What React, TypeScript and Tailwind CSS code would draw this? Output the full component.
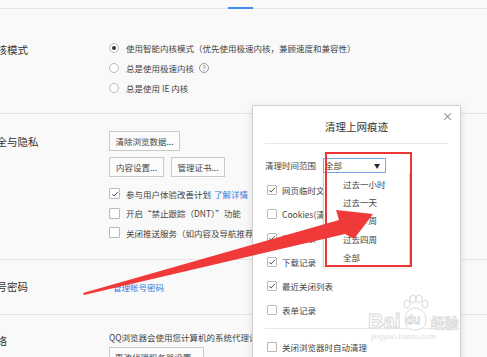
import React from "react";

const cjk = "font-['Noto_Sans_CJK_SC','Noto_Sans',sans-serif]";

function Radio({ on }: { on?: boolean }) {
  return (
    <span className="flex h-[10px] w-[10px] shrink-0 items-center justify-center rounded-full border border-[#b9b9b9] bg-white">
      {on && <span className="h-[4px] w-[4px] rounded-full bg-[#333]" />}
    </span>
  );
}

function Check({ on, small }: { on?: boolean; small?: boolean }) {
  return (
    <span
      className={
        small
          ? "flex h-[10px] w-[10px] shrink-0 items-center justify-center rounded-[1px] border border-[#b9b9b9] bg-white"
          : "flex h-[11px] w-[11px] shrink-0 items-center justify-center rounded-[1px] border border-[#b9b9b9] bg-white"
      }
    >
      {on && (
        <svg viewBox="0 0 10 10" className="h-[8px] w-[8px]">
          <path d="M1.6 5.2 L3.9 7.4 L8.4 2.6" fill="none" stroke="#444" strokeWidth="1.2" />
        </svg>
      )}
    </span>
  );
}

function Btn({ children, w }: { children: React.ReactNode; w: string }) {
  return (
    <div className={`${w} flex h-[20px] items-center justify-center border border-[#c9c9c9] bg-[#fcfcfc] text-[8.5px] leading-none text-[#444]`}>
      {children}
    </div>
  );
}

const options = ["过去一小时", "过去一天", "过去一周", "过去四周", "全部"];

const dialogChecks = [
  { t: "网页临时文件", on: true },
  { t: "Cookies(清除后需要重新登录)", on: false },
  { t: "历史记录", on: true },
  { t: "下载记录", on: true },
  { t: "最近关闭列表", on: true },
  { t: "表单记录", on: false },
];

export default function App() {
  return (
    <div className={`relative h-[357px] w-[487px] overflow-hidden bg-[#f9f9f9] text-[#444] ${cjk}`}>
      {/* top tab strip */}
      <div className="h-[9px] border-b border-[#e6e6e6] pt-[7px]">
        <div className="ml-[228px] h-[2px] w-[25px] bg-[#3d8ef0]" />
      </div>

      {/* kernel mode */}
      <div className="flex h-[105px] border-b border-[#e6e6e6]">
        <div className="w-[109px] shrink-0 overflow-hidden pt-[34px]">
          <div className="ml-[-14px] whitespace-nowrap text-[10.5px] leading-[14px] text-[#333]">内核模式</div>
        </div>
        <div className="pt-[29px] text-[8.5px] leading-none">
          <div className="flex h-[20px] items-center gap-[7px] whitespace-nowrap">
            <Radio on />
            <span>使用智能内核模式（优先使用极速内核，兼顾速度和兼容性）</span>
          </div>
          <div className="flex h-[20px] items-center gap-[7px] whitespace-nowrap">
            <Radio />
            <span>总是使用极速内核</span>
            <span className="ml-[-2px] flex h-[10px] w-[10px] items-center justify-center rounded-full border border-[#999] text-[7px] text-[#777]">?</span>
          </div>
          <div className="flex h-[20px] items-center gap-[7px] whitespace-nowrap">
            <Radio />
            <span>总是使用 IE 内核</span>
          </div>
        </div>
      </div>

      {/* security & privacy */}
      <div className="flex h-[146px] border-b border-[#e6e6e6]">
        <div className="w-[109px] shrink-0 overflow-hidden pt-[21px]">
          <div className="ml-[-14px] whitespace-nowrap text-[10.5px] leading-[14px] text-[#333]">安全与隐私</div>
        </div>
        <div className="pt-[17px] text-[8.5px] leading-none">
          <Btn w="w-[71px]">清除浏览数据...</Btn>
          <div className="mt-[6px] flex gap-[7px]">
            <Btn w="w-[55px]">内容设置...</Btn>
            <Btn w="w-[54px]">管理证书...</Btn>
          </div>
          <div className="mt-[7px]">
            <div className="flex h-[19.5px] items-center gap-[6px] whitespace-nowrap">
              <Check on />
              <span>参与用户体验改善计划</span>
              <span className="ml-[-3px] text-[#2f7de1]">了解详情</span>
            </div>
            <div className="flex h-[19.5px] items-center gap-[6px] whitespace-nowrap">
              <Check />
              <span>开启“禁止跟踪（DNT）”功能</span>
            </div>
            <div className="flex h-[19.5px] items-center gap-[6px] whitespace-nowrap">
              <Check />
              <span>关闭推送服务（如内容及导航推荐）</span>
            </div>
          </div>
        </div>
      </div>

      {/* accounts */}
      <div className="flex h-[55px] items-center border-b border-[#e6e6e6]">
        <div className="w-[109px] shrink-0 overflow-hidden">
          <div className="ml-[-14px] whitespace-nowrap text-[10.5px] leading-[14px] text-[#333]">帐号密码</div>
        </div>
        <div className="pl-[4px] text-[8.5px] leading-none text-[#2f7de1]">管理帐号密码</div>
      </div>

      {/* network */}
      <div className="flex">
        <div className="w-[109px] shrink-0 overflow-hidden pt-[19px]">
          <div className="ml-[-14px] whitespace-nowrap text-[10.5px] leading-[14px] text-[#333]">网络</div>
        </div>
        <div className="pt-[16px] text-[8.5px] leading-[12px]">
          <div className="whitespace-nowrap">QQ浏览器会使用您计算机的系统代理设置连接到网络。</div>
          <div className="mt-[4px]">
            <Btn w="w-[95px]">更改代理服务器设置...</Btn>
          </div>
        </div>
      </div>

      {/* clear-traces dialog */}
      <div className="absolute left-[252px] top-[105px] h-[270px] w-[209px] border border-[#cfcfcf] bg-white shadow-[0_2px_8px_rgba(0,0,0,0.12)]">
        <div className="relative h-[37px] pt-[14px] text-center text-[10.5px] leading-[14px] text-[#333]">
          清理上网痕迹
          <span className="absolute right-[7px] top-[4px] text-[11px] leading-[12px] text-[#777]">×</span>
        </div>
        <div className="mx-[12px] h-px bg-[#e8e8e8]" />
        <div className="px-[12px] text-[8.5px] leading-none">
          <div className="mt-[14px] flex h-[15px] items-center">
            <span className="w-[58px] whitespace-nowrap">清理时间范围</span>
            <div className="flex h-[15px] w-[63px] items-center justify-between border border-[#7aa6e4] bg-white pl-[1px] pr-[5px]">
              <span>全部</span>
              <span className="text-[6px] text-[#222]">▼</span>
            </div>
          </div>
          <div className="mt-[5px] ml-[2px]">
            {dialogChecks.map((c) => (
              <div key={c.t} className="flex h-[24px] items-center gap-[5px] whitespace-nowrap">
                <Check small on={c.on} />
                <span>{c.t}</span>
              </div>
            ))}
          </div>
          <div className="mt-[6px] h-px bg-[#e8e8e8]" />
          <div className="ml-[2px] mt-[6px] flex h-[24px] items-center gap-[5px] whitespace-nowrap">
            <Check small />
            <span>关闭浏览器时自动清理</span>
          </div>
        </div>
      </div>

      {/* open dropdown list */}
      <div className="absolute left-[323px] top-[173px] h-[94px] w-[87px] border border-t-0 border-[#cfcfcf] bg-white pt-[2px] text-[8.5px] leading-none shadow-[0_2px_4px_rgba(0,0,0,0.08)]">
        {options.map((o) => (
          <div key={o} className="flex h-[18.25px] items-center pl-[19px] whitespace-nowrap">
            {o}
          </div>
        ))}
      </div>

      {/* red annotation box */}
      <div className="absolute left-[325px] top-[152px] h-[115px] w-[87px] border-2 border-[#ee3535]" />

      {/* red annotation arrow */}
      <svg className="pointer-events-none absolute left-0 top-0 h-[357px] w-[487px]" viewBox="0 0 487 357">
        <polygon points="83,293 339,220 336,210 373,214 354,239 345,234 84,295" fill="#f03a3a" />
      </svg>

      {/* watermark */}
      <div className="pointer-events-none absolute left-[368px] top-[294px] flex flex-col items-start opacity-90">
        <div className="flex items-end">
          <span className="font-['Liberation_Sans',sans-serif] text-[21px] font-bold leading-[22px] text-white [-webkit-text-stroke:1px_#d6d6d6]">Bai</span>
          <div className="relative h-[38px] w-[28px]">
            <svg viewBox="0 0 28 38" className="absolute inset-0 h-[38px] w-[28px]">
              <g fill="#fff" stroke="#d6d6d6" strokeWidth="1">
                <ellipse cx="6" cy="10" rx="3" ry="4" />
                <ellipse cx="12" cy="5" rx="3" ry="4" />
                <ellipse cx="18" cy="5" rx="3" ry="4" />
                <ellipse cx="24" cy="10" rx="3" ry="4" />
                <path d="M4 26 C4 18 9 14 14 14 C19 14 25 18 25 26 C25 33 20 36 14 36 C8 36 4 33 4 26 Z" />
              </g>
            </svg>
            <span className="absolute left-[5px] top-[19px] font-['Liberation_Sans',sans-serif] text-[12px] font-bold leading-[14px] text-white [-webkit-text-stroke:0.8px_#d0d0d0]">du</span>
          </div>
          <span className="ml-[2px] text-[14px] font-bold leading-[20px] text-white [-webkit-text-stroke:0.8px_#d6d6d6]">经验</span>
        </div>
        <span className="ml-[3px] font-['Liberation_Sans',sans-serif] text-[8px] leading-[10px] text-[#dcdcdc]">jingyan.baidu.com</span>
      </div>
    </div>
  );
}
